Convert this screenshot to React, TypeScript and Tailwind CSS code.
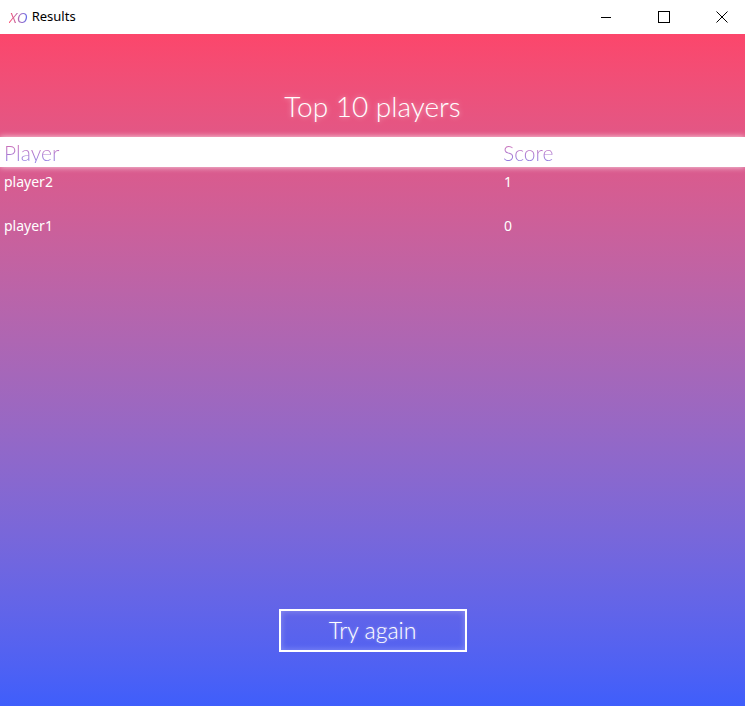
import React from "react";

export default function App() {
  const rows = [
    { name: "player2", score: "1" },
    { name: "player1", score: "0" },
  ];
  return (
    <div className="w-[745px] h-[706px] flex flex-col overflow-hidden" style={{ fontFamily: '"Open Sans", "Noto Sans", sans-serif' }}>
      {/* title bar */}
      <div className="h-[34px] bg-white flex items-center shrink-0">
        <span className="ml-[9px] italic text-[15px] leading-none font-['Open_Sans'] bg-gradient-to-r from-[#fc466b] to-[#5b6cf0] bg-clip-text text-transparent">XO</span>
        <span className="ml-[4px] text-[13px] text-black font-['Noto_Sans']">Results</span>
        <div className="ml-auto flex h-full">
          <div className="w-[46px] h-full flex items-center justify-center">
            <svg width="12" height="12" viewBox="0 0 12 12"><path d="M1 6.5h10" stroke="#000" strokeWidth="1" /></svg>
          </div>
          <div className="w-[46px] h-full flex items-center justify-center ml-[12px]">
            <svg width="12" height="12" viewBox="0 0 12 12"><rect x="0.5" y="0.5" width="11" height="11" fill="none" stroke="#000" strokeWidth="1" /></svg>
          </div>
          <div className="w-[46px] h-full flex items-center justify-center ml-[12px]">
            <svg width="12" height="12" viewBox="0 0 12 12"><path d="M0.5 0.5l11 11M11.5 0.5l-11 11" stroke="#000" strokeWidth="1" /></svg>
          </div>
        </div>
      </div>
      {/* body */}
      <div className="flex-1 flex flex-col bg-gradient-to-b from-[#fc466b] to-[#3f5efb]">
        <div className="h-[103px] flex items-end justify-center pb-[17px]">
          <h1 className="text-[28px] font-light leading-none text-white font-['Lato'] [text-shadow:0_0_5px_rgba(255,255,255,0.5)]">Top 10 players</h1>
        </div>
        <div className="h-[30px] bg-white flex items-center shadow-[0_0_6px_rgba(255,255,255,0.8)]">
          <span className="w-[500px] pl-[4px] text-[21px] font-light leading-none font-['Lato'] bg-gradient-to-b from-[#d66ab0] to-[#8a7ee6] bg-clip-text text-transparent">Player</span>
          <span className="pl-[3px] text-[21px] font-light leading-none font-['Lato'] bg-gradient-to-b from-[#d66ab0] to-[#8a7ee6] bg-clip-text text-transparent">Score</span>
        </div>
        <div className="flex flex-col pt-[5px]">
          {rows.map((r) => (
            <div key={r.name} className="h-[44px] flex items-start text-[14px] text-white font-['Noto_Sans'] leading-[20px]">
              <span className="w-[504px] pl-[4px]">{r.name}</span>
              <span>{r.score}</span>
            </div>
          ))}
        </div>
        <div className="flex-1" />
        <div className="flex justify-center pb-[54px]">
          <button className="w-[188px] h-[43px] border-2 border-white text-white text-[23px] font-light font-['Lato'] flex items-center justify-center shadow-[inset_0_0_6px_rgba(255,255,255,0.3)] [text-shadow:0_0_3px_rgba(255,255,255,0.4)]">
            Try again
          </button>
        </div>
      </div>
    </div>
  );
}
